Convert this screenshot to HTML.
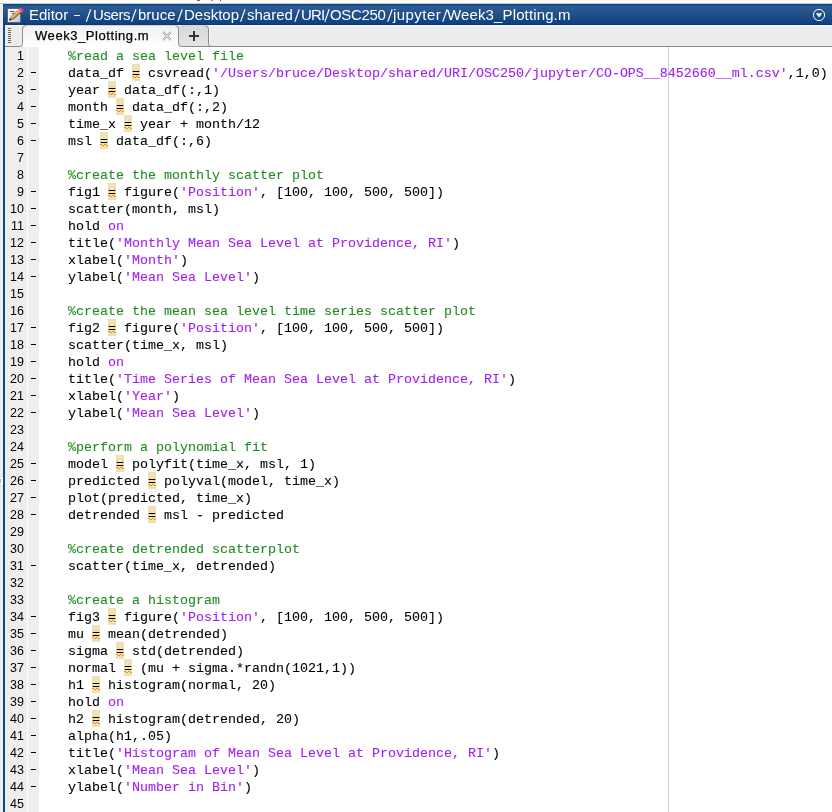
<!DOCTYPE html>
<html><head><meta charset="utf-8">
<style>
html,body{margin:0;padding:0;}
body{width:832px;height:812px;overflow:hidden;position:relative;background:#ffffff;font-family:"Liberation Sans",sans-serif;}
.abs{position:absolute;}
#topline{left:0;top:3px;width:832px;height:1px;background:#c9c9c9;}
#leftout{left:0;top:4px;width:3px;height:808px;background:#eeeeee;}
#leftb{left:3px;top:4px;width:2px;height:808px;background:#0d4a8a;}
#title{left:3px;top:4px;width:829px;height:21px;background:linear-gradient(#0b4587 0px,#0b4587 1px,#1c5190 1px,#1c5190 2px,#2e5d96 2px,#10407c 20px,#073a7a 20px);}
.tt{will-change:transform;top:4px;color:#fff;font-size:15px;white-space:nowrap;line-height:22px;}
#tabbar{left:5px;top:25px;width:827px;height:22px;background:#ececec;}
#tabhl{left:5px;top:25px;width:827px;height:1px;background:#fafafa;}
#tabline{left:5px;top:46px;width:827px;height:1px;background:#9a9a9a;}
#editor{left:5px;top:47px;width:827px;height:765px;background:#fff;}
#g1{left:5px;top:47px;width:22px;height:765px;background:#eeeeee;}
#g2{left:28px;top:47px;width:11px;height:765px;background:#eeeeee;}
#margin{left:668px;top:47px;width:1px;height:765px;background:#cfcfcf;}
.ln{position:absolute;will-change:transform;left:6px;width:18px;text-align:right;height:17px;line-height:17px;font-size:12.5px;color:#000;}
.dash{position:absolute;left:31px;width:5px;height:1px;background:#000;}
.cl{position:absolute;will-change:transform;left:68px;height:17px;line-height:17px;font-family:"Liberation Mono",monospace;font-size:13.3333px;color:#000;white-space:pre;-webkit-text-stroke:0.1px currentColor;}
.cm{color:#228b22;}
.st{color:#a020f0;}
.hl{position:absolute;width:8px;height:17px;background:#eee2b3;}
.hl::before{content:"";position:absolute;left:0;top:12px;width:8px;height:1px;background:repeating-linear-gradient(90deg,#ff8c00 0 2px,transparent 2px 4px);}
.hl::after{content:"";position:absolute;left:0;top:13px;width:8px;height:1px;background:repeating-linear-gradient(90deg,transparent 0 2px,#ff8c00 2px 4px);}
</style></head><body>
<div class="abs" id="topline"></div>
<div class="abs" style="left:197px;top:0;width:3px;height:1px;background:#666"></div><div class="abs" style="left:211px;top:0;width:2px;height:1px;background:#999"></div><div class="abs" style="left:220px;top:0;width:1px;height:1px;background:#555"></div>

<div class="abs" id="leftout"></div>
<div class="abs" style="left:0;top:476px;width:3px;height:1px;background:#dcdcdc"></div><div class="abs" style="left:0;top:477px;width:3px;height:8px;background:#fff"></div><div class="abs" style="left:0;top:479px;width:1px;height:4px;background:#b8b8b8"></div><div class="abs" style="left:0;top:485px;width:3px;height:1px;background:#dcdcdc"></div>
<div class="abs" id="leftb"></div>
<div class="abs" id="title"></div>
<svg class="abs" style="left:0;top:0" width="832" height="26"><g stroke="#f4f7fb" stroke-width="1.2" stroke-linecap="butt"><line x1="86.3" y1="21.8" x2="90.7" y2="9.2"/><line x1="131.6" y1="21.8" x2="136.0" y2="9.2"/><line x1="177.8" y1="21.8" x2="182.2" y2="9.2"/><line x1="240.6" y1="21.8" x2="245.0" y2="9.2"/><line x1="294.9" y1="21.8" x2="299.3" y2="9.2"/><line x1="324.8" y1="21.8" x2="329.2" y2="9.2"/><line x1="387.8" y1="21.8" x2="392.2" y2="9.2"/><line x1="442.7" y1="21.8" x2="447.1" y2="9.2"/></g></svg>
<div class="abs tt" style="left:28.5px">Editor</div>
<div class="abs" style="left:74px;top:15px;width:6px;height:1px;background:#e8eef6"></div>
<div class="abs tt" style="left:93.0px;letter-spacing:-0.4px">Users</div>
<div class="abs tt" style="left:138.4px">bruce</div>
<div class="abs tt" style="left:183.6px">Desktop</div>
<div class="abs tt" style="left:246.6px">shared</div>
<div class="abs tt" style="left:300.6px;letter-spacing:-0.8px">URI</div>
<div class="abs tt" style="left:329.5px;letter-spacing:-0.35px">OSC250</div>
<div class="abs tt" style="left:392.9px;letter-spacing:0.45px">jupyter</div>
<div class="abs tt" style="left:447.3px;letter-spacing:0.13px">Week3_Plotting.m</div>
<svg class="abs" style="left:4px;top:4px" width="22" height="22" viewBox="0 0 22 22">
 <defs>
  <linearGradient id="bx" x1="0" y1="0" x2="1" y2="1"><stop offset="0" stop-color="#ffffff"/><stop offset="0.45" stop-color="#e4edf6"/><stop offset="1" stop-color="#a8c4e0"/></linearGradient>
  <linearGradient id="pb" x1="0" y1="0" x2="0" y2="1"><stop offset="0" stop-color="#9a6a2a"/><stop offset="0.3" stop-color="#f0c878"/><stop offset="0.55" stop-color="#dca050"/><stop offset="1" stop-color="#7a4a18"/></linearGradient>
 </defs>
 <rect x="3.5" y="4.5" width="13" height="14" fill="url(#bx)" stroke="#6e6258" stroke-width="1"/>
 <rect x="6" y="7" width="4.5" height="1" fill="#555"/>
 <rect x="8" y="9" width="2" height="1" fill="#666"/>
 <g transform="translate(5.3 16.5) rotate(-41.5)">
  <path d="M0 0 L3.4 -2 L3.4 2 Z" fill="#7a7570"/>
  <path d="M0 0 L1.7 -1 L1.7 1 Z" fill="#000"/>
  <rect x="3.4" y="-2" width="11" height="4" fill="url(#pb)"/>
  <rect x="14.4" y="-2.05" width="3.3" height="4.1" fill="#d9487e"/>
  <rect x="14.4" y="-2.05" width="0.9" height="4.1" fill="#ee86aa"/>
 </g>
</svg>
<svg class="abs" style="left:812px;top:8px" width="14" height="14" viewBox="0 0 14 14">
 <circle cx="7" cy="7" r="5.6" fill="none" stroke="#fff" stroke-width="1"/>
 <path d="M3.8 5.2 L10.2 5.2 L7 9.6 Z" fill="#fff"/>
</svg>
<div class="abs" id="tabbar"></div>
<!-- grip -->
<div class="abs" style="left:8px;top:28px;width:3px;height:15px;background:repeating-linear-gradient(#646464 0 1px,transparent 1px 2px);"></div>
<!-- tabs svg -->
<svg class="abs" style="left:5px;top:25px" width="827" height="22" viewBox="0 0 827 22">
 <defs>
  <linearGradient id="tg" x1="0" y1="0" x2="0" y2="1"><stop offset="0" stop-color="#f1f1f3"/><stop offset="1" stop-color="#ffffff"/></linearGradient>
  <linearGradient id="pg2" x1="0" y1="0" x2="0" y2="1"><stop offset="0" stop-color="#d9d9d9"/><stop offset="1" stop-color="#e4e4e4"/></linearGradient>
 </defs>
 <rect x="0" y="0" width="17" height="1" fill="#fafafa"/>
 <rect x="204" y="0" width="623" height="1" fill="#fafafa"/>
 <rect x="204" y="1" width="1" height="20" fill="#f8f8f8"/>
 <path d="M17.5 22 L17.5 4 Q17.5 0.5 21 0.5 L170 0.5 Q173.5 0.5 173.5 4 L173.5 22 Z" fill="url(#tg)"/>
 <path d="M173.5 1 L200 1 Q203.5 1 203.5 4 L203.5 21.5 L173.5 21.5 Z" fill="url(#pg2)"/>
 <path d="M21 0.5 L170 0.5 M176.5 0.5 L200 0.5" fill="none" stroke="#d6d2cc" stroke-width="1"/>
 <path d="M0 21.5 L14.5 21.5 Q17.5 21.5 17.5 18.5 L17.5 4 Q17.5 0.8 21 0.6" fill="none" stroke="#8a8a8a" stroke-width="1"/>
 <path d="M170.5 0.6 Q173.5 0.8 173.5 4 L173.5 18.5 Q173.5 21.5 176.5 21.5 L827 21.5" fill="none" stroke="#8a8a8a" stroke-width="1"/>
 <path d="M200 0.6 Q203.5 0.8 203.5 4 L203.5 18.5 Q203.5 21.5 206.5 21.5" fill="none" stroke="#8a8a8a" stroke-width="1"/>
</svg>
<div class="abs" style="will-change:transform;left:35px;top:29px;font-size:13px;letter-spacing:0.56px;color:#000;-webkit-text-stroke:0.25px #000;line-height:14px;white-space:nowrap;">Week3_Plotting.m</div>
<svg class="abs" style="left:162px;top:31px" width="10" height="10" viewBox="0 0 10 10">
 <path d="M1 1 L9 9 M9 1 L1 9" stroke="#a8a8a8" stroke-width="2.2"/>
 <path d="M1 1 L9 9 M9 1 L1 9" stroke="#f4f4f4" stroke-width="0.8"/>
</svg>
<svg class="abs" style="left:189px;top:31px" width="10" height="10" viewBox="0 0 10 10">
 <path d="M5 0 V10 M0 5 H10" stroke="#333" stroke-width="2"/>
</svg>
<div class="abs" id="editor"></div>
<div class="abs" id="g1"></div>
<div class="abs" id="g2"></div>
<div class="abs" id="margin"></div>
<div class="ln" style="top:48px">1</div>
<div class="ln" style="top:65px">2</div>
<div class="hl" style="left:132px;top:64px"></div>
<div class="dash" style="top:72px"></div>
<div class="ln" style="top:82px">3</div>
<div class="hl" style="left:108px;top:81px"></div>
<div class="dash" style="top:89px"></div>
<div class="ln" style="top:99px">4</div>
<div class="hl" style="left:116px;top:98px"></div>
<div class="dash" style="top:106px"></div>
<div class="ln" style="top:116px">5</div>
<div class="hl" style="left:124px;top:115px"></div>
<div class="dash" style="top:123px"></div>
<div class="ln" style="top:133px">6</div>
<div class="hl" style="left:100px;top:132px"></div>
<div class="dash" style="top:140px"></div>
<div class="ln" style="top:150px">7</div>
<div class="ln" style="top:167px">8</div>
<div class="ln" style="top:184px">9</div>
<div class="hl" style="left:108px;top:183px"></div>
<div class="dash" style="top:191px"></div>
<div class="ln" style="top:201px">10</div>
<div class="dash" style="top:208px"></div>
<div class="ln" style="top:218px">11</div>
<div class="dash" style="top:225px"></div>
<div class="ln" style="top:235px">12</div>
<div class="dash" style="top:242px"></div>
<div class="ln" style="top:252px">13</div>
<div class="dash" style="top:259px"></div>
<div class="ln" style="top:269px">14</div>
<div class="dash" style="top:276px"></div>
<div class="ln" style="top:286px">15</div>
<div class="ln" style="top:303px">16</div>
<div class="ln" style="top:320px">17</div>
<div class="hl" style="left:108px;top:319px"></div>
<div class="dash" style="top:327px"></div>
<div class="ln" style="top:337px">18</div>
<div class="dash" style="top:344px"></div>
<div class="ln" style="top:354px">19</div>
<div class="dash" style="top:361px"></div>
<div class="ln" style="top:371px">20</div>
<div class="dash" style="top:378px"></div>
<div class="ln" style="top:388px">21</div>
<div class="dash" style="top:395px"></div>
<div class="ln" style="top:405px">22</div>
<div class="dash" style="top:412px"></div>
<div class="ln" style="top:422px">23</div>
<div class="ln" style="top:439px">24</div>
<div class="ln" style="top:456px">25</div>
<div class="hl" style="left:116px;top:455px"></div>
<div class="dash" style="top:463px"></div>
<div class="ln" style="top:473px">26</div>
<div class="hl" style="left:148px;top:472px"></div>
<div class="dash" style="top:480px"></div>
<div class="ln" style="top:490px">27</div>
<div class="dash" style="top:497px"></div>
<div class="ln" style="top:507px">28</div>
<div class="hl" style="left:148px;top:506px"></div>
<div class="dash" style="top:514px"></div>
<div class="ln" style="top:524px">29</div>
<div class="ln" style="top:541px">30</div>
<div class="ln" style="top:558px">31</div>
<div class="dash" style="top:565px"></div>
<div class="ln" style="top:575px">32</div>
<div class="ln" style="top:592px">33</div>
<div class="ln" style="top:609px">34</div>
<div class="hl" style="left:108px;top:608px"></div>
<div class="dash" style="top:616px"></div>
<div class="ln" style="top:626px">35</div>
<div class="hl" style="left:92px;top:625px"></div>
<div class="dash" style="top:633px"></div>
<div class="ln" style="top:643px">36</div>
<div class="hl" style="left:116px;top:642px"></div>
<div class="dash" style="top:650px"></div>
<div class="ln" style="top:660px">37</div>
<div class="hl" style="left:124px;top:659px"></div>
<div class="dash" style="top:667px"></div>
<div class="ln" style="top:677px">38</div>
<div class="hl" style="left:92px;top:676px"></div>
<div class="dash" style="top:684px"></div>
<div class="ln" style="top:694px">39</div>
<div class="dash" style="top:701px"></div>
<div class="ln" style="top:711px">40</div>
<div class="hl" style="left:92px;top:710px"></div>
<div class="dash" style="top:718px"></div>
<div class="ln" style="top:728px">41</div>
<div class="dash" style="top:735px"></div>
<div class="ln" style="top:745px">42</div>
<div class="dash" style="top:752px"></div>
<div class="ln" style="top:762px">43</div>
<div class="dash" style="top:769px"></div>
<div class="ln" style="top:779px">44</div>
<div class="dash" style="top:786px"></div>
<div class="ln" style="top:796px">45</div>
<div class="cl" style="top:48px"><span class="cm">%read a sea level file</span></div>
<div class="cl" style="top:65px">data_df = csvread(<span class="st">&#x27;/Users/bruce/Desktop/shared/URI/OSC250/jupyter/CO-OPS__8452660__ml.csv&#x27;</span>,1,0)</div>
<div class="cl" style="top:82px">year = data_df(:,1)</div>
<div class="cl" style="top:99px">month = data_df(:,2)</div>
<div class="cl" style="top:116px">time_x = year + month/12</div>
<div class="cl" style="top:133px">msl = data_df(:,6)</div>
<div class="cl" style="top:150px"></div>
<div class="cl" style="top:167px"><span class="cm">%create the monthly scatter plot</span></div>
<div class="cl" style="top:184px">fig1 = figure(<span class="st">&#x27;Position&#x27;</span>, [100, 100, 500, 500])</div>
<div class="cl" style="top:201px">scatter(month, msl)</div>
<div class="cl" style="top:218px">hold <span class="st">on</span></div>
<div class="cl" style="top:235px">title(<span class="st">&#x27;Monthly Mean Sea Level at Providence, RI&#x27;</span>)</div>
<div class="cl" style="top:252px">xlabel(<span class="st">&#x27;Month&#x27;</span>)</div>
<div class="cl" style="top:269px">ylabel(<span class="st">&#x27;Mean Sea Level&#x27;</span>)</div>
<div class="cl" style="top:286px"></div>
<div class="cl" style="top:303px"><span class="cm">%create the mean sea level time series scatter plot</span></div>
<div class="cl" style="top:320px">fig2 = figure(<span class="st">&#x27;Position&#x27;</span>, [100, 100, 500, 500])</div>
<div class="cl" style="top:337px">scatter(time_x, msl)</div>
<div class="cl" style="top:354px">hold <span class="st">on</span></div>
<div class="cl" style="top:371px">title(<span class="st">&#x27;Time Series of Mean Sea Level at Providence, RI&#x27;</span>)</div>
<div class="cl" style="top:388px">xlabel(<span class="st">&#x27;Year&#x27;</span>)</div>
<div class="cl" style="top:405px">ylabel(<span class="st">&#x27;Mean Sea Level&#x27;</span>)</div>
<div class="cl" style="top:422px"></div>
<div class="cl" style="top:439px"><span class="cm">%perform a polynomial fit</span></div>
<div class="cl" style="top:456px">model = polyfit(time_x, msl, 1)</div>
<div class="cl" style="top:473px">predicted = polyval(model, time_x)</div>
<div class="cl" style="top:490px">plot(predicted, time_x)</div>
<div class="cl" style="top:507px">detrended = msl - predicted</div>
<div class="cl" style="top:524px"></div>
<div class="cl" style="top:541px"><span class="cm">%create detrended scatterplot</span></div>
<div class="cl" style="top:558px">scatter(time_x, detrended)</div>
<div class="cl" style="top:575px"></div>
<div class="cl" style="top:592px"><span class="cm">%create a histogram</span></div>
<div class="cl" style="top:609px">fig3 = figure(<span class="st">&#x27;Position&#x27;</span>, [100, 100, 500, 500])</div>
<div class="cl" style="top:626px">mu = mean(detrended)</div>
<div class="cl" style="top:643px">sigma = std(detrended)</div>
<div class="cl" style="top:660px">normal = (mu + sigma.*randn(1021,1))</div>
<div class="cl" style="top:677px">h1 = histogram(normal, 20)</div>
<div class="cl" style="top:694px">hold <span class="st">on</span></div>
<div class="cl" style="top:711px">h2 = histogram(detrended, 20)</div>
<div class="cl" style="top:728px">alpha(h1,.05)</div>
<div class="cl" style="top:745px">title(<span class="st">&#x27;Histogram of Mean Sea Level at Providence, RI&#x27;</span>)</div>
<div class="cl" style="top:762px">xlabel(<span class="st">&#x27;Mean Sea Level&#x27;</span>)</div>
<div class="cl" style="top:779px">ylabel(<span class="st">&#x27;Number in Bin&#x27;</span>)</div>
<div class="cl" style="top:796px"></div>
</body></html>
